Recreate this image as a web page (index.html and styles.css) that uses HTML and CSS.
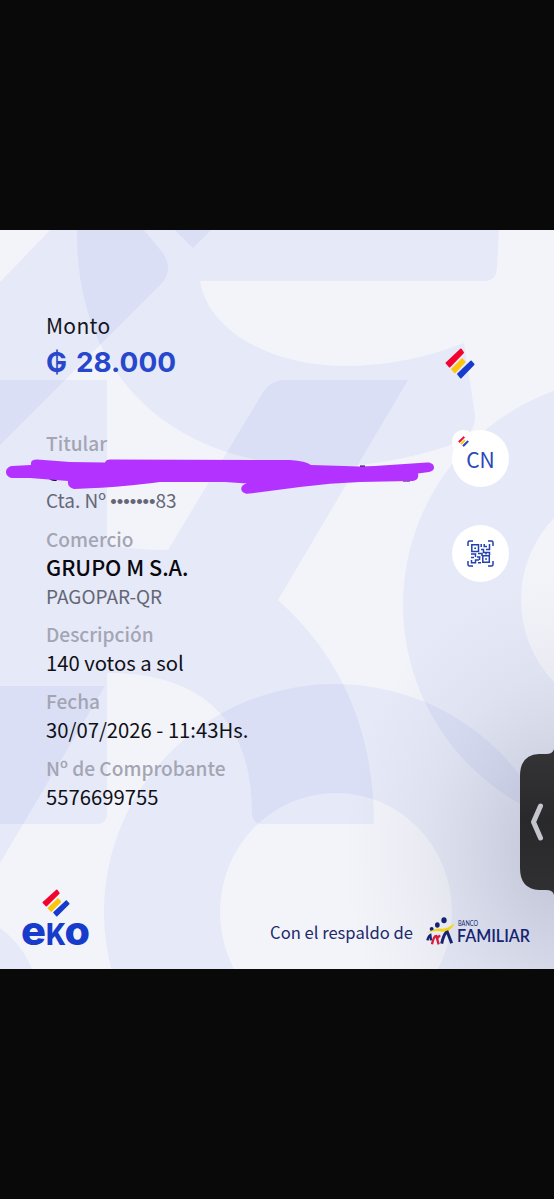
FILE: index.html
```
<!DOCTYPE html>
<html lang="es">
<head>
<meta charset="utf-8">
<title>Comprobante</title>
<link rel="stylesheet" href="styles.css">
</head>
<body>
<svg class="defs" aria-hidden="true">
  <symbol id="bars" viewBox="44 54 91 95" preserveAspectRatio="none">
    <g stroke-width="5" stroke-linejoin="round">
      <path fill="#f2042f" stroke="#f2042f" d="M48 100 92 58 99 68 58 111Z"/>
      <path fill="#fdc60c" stroke="#fdc60c" d="M65 119 96 88 104 97 74 129Z"/>
      <path fill="#173bcb" stroke="#173bcb" d="M83 134 123 95 131 104 92 145Z"/>
    </g>
  </symbol>
</svg>
<main class="receipt">
  <svg class="pattern" viewBox="0 230 554 739" aria-hidden="true">
    <defs>
      <radialGradient id="shade">
        <stop offset="0" stop-color="#777d91" stop-opacity=".38"/>
        <stop offset=".3" stop-color="#8a90a2" stop-opacity=".27"/>
        <stop offset=".65" stop-color="#a0a5b4" stop-opacity=".11"/>
        <stop offset="1" stop-color="#b0b5c2" stop-opacity="0"/>
      </radialGradient>
    </defs>
    <g class="shape">
      <path d="M50 230H144L163 253Q173 268 163 282L0 445V282Z"/>
      <path d="M77 230Q76 292 100 344C140 425 220 467 330 467Q390 465 448 446L466 436Q476 428 475 415L464 343Q405 366 345 366C270 366 208 330 200 281H484Q496 281 497 268L499 230Z"/>
      <path d="M175 230H211L193 248Z"/>
      <path d="M0 380H107V814Q107 824 97 824H0Z"/>
      <path d="M285 380H408L278 600Q374 686 374 824H262Q253 824 252 814C252 730 212 673 107 673V545Q138 550 168 550L262 394Q270 380 285 380Z"/>
      <path d="M0 686H105L0 863Z"/>
      <path fill-rule="evenodd" d="M104 912a231 228 0 1 0 462 0a231 228 0 1 0-462 0ZM220 912a116 119 0 1 0 232 0a116 119 0 1 0-232 0Z"/>
      <path fill-rule="evenodd" d="M403 605a230 228 0 1 0 460 0a230 228 0 1 0-460 0ZM521 600a115 117 0 1 0 230 0a115 117 0 1 0-230 0Z"/>
      <path d="M0 928Q22 944 32 969H0Z"/>
    </g>
    <ellipse cx="568" cy="850" rx="225" ry="275" fill="url(#shade)"/>
  </svg>

  <div class="content">
    <section class="summary">
      <div>
        <div class="amount-label">Monto</div>
        <svg class="amount" viewBox="0 0 132 34"><text class="amount-text" x="0" y="26" textLength="21" lengthAdjust="spacingAndGlyphs">₲</text><text class="amount-text" x="30" y="26" textLength="100" lengthAdjust="spacingAndGlyphs">28.000</text></svg>
      </div>
    </section>
    <div class="columns">
      <div class="details">
        <section class="field"><div class="label">Titular</div><div class="row"></div><div class="note">Cta. Nº <span class="mask">•••••••</span>83</div></section>
        <section class="field"><div class="label">Comercio</div><div class="value strong">GRUPO M S.A.</div><div class="note">PAGOPAR-QR</div></section>
        <section class="field"><div class="label">Descripción</div><div class="value">140 votos a sol</div></section>
        <section class="field"><div class="label">Fecha</div><div class="value">30/07/2026 - 11:43Hs.</div></section>
        <section class="field"><div class="label">Nº de Comprobante</div><div class="value">5576699755</div></section>
      </div>
      <aside class="side">
        <svg class="mark"><use href="#bars"/></svg>
        <div class="avatar"><span class="badge"><svg><use href="#bars"/></svg></span><span class="initials">CN</span></div>
        <div class="avatar qr">
          <svg viewBox="0 0 27 27" fill="none" stroke="#2440ad" stroke-width="1.5">
            <path d="M1 6V2.500Q1 1 2.500 1H6M21 1H24.500Q26 1 26 2.500V6M26 21V24.500Q26 26 24.500 26H21M6 26H2.500Q1 26 1 24.500V21"/>
            <path d="M4.800 4.800H11.500V11.500H4.800ZM15.800 15.800H22.300V22.300H15.800Z"/>
            <path d="M7.300 8.200H9M18.200 19H20M14.200 4V7M17.200 4V6.500H20M22.500 4V9.500H19M14 9.500H16.500V12.500H22.500V15M4 14H8.500V17M11 13.500H15V16M4 17.500H7M10 17H13.500M12.500 17V20M4.500 20V22.700H8.500V20H12M11 22.700H14M19 12V14.500"/>
          </svg>
        </div>
      </aside>
    </div>
    <footer class="footer">
      <div class="eko">
        <svg class="eko-bars"><use href="#bars"/></svg>
        <svg class="eko-word" viewBox="0 0 68 40"><text class="eko-text" x="-1" y="28" textLength="25" lengthAdjust="spacingAndGlyphs">e</text><text class="eko-text eko-k" x="24" y="28" textLength="20" lengthAdjust="spacingAndGlyphs">K</text><text class="eko-text" x="42.500" y="28" textLength="25.500" lengthAdjust="spacingAndGlyphs">o</text></svg>
      </div>
      <div class="backing">
        <span>Con el respaldo de</span>
        <svg class="familiar" viewBox="0 0 106 32">
          <g transform="translate(1 1) scale(.3333)">
            <g fill="#142470"><ellipse cx="54" cy="10" rx="8" ry="9"/><ellipse cx="34" cy="24" rx="7" ry="8"/><ellipse cx="17" cy="36" rx="6" ry="6"/></g>
            <path d="M0 49Q30 31 49 35Q65 36 86 18Q75 45 49 44Q28 39 0 49Z" fill="#f4d414"/>
            <g fill="none" stroke-width="7"><path stroke="#142470" d="M4 70Q8 56 13 54L15 70"/><path stroke="#d81c3d" d="M18 82Q23 57 31 57L38 82M34 64L42 55"/><path stroke="#142470" stroke-width="9" d="M47 80Q54 47 64 45Q70 60 77 79"/></g>
          </g>
          <text class="banco" x="33" y="10" textLength="20" lengthAdjust="spacingAndGlyphs">BANCO</text>
          <text class="familiar-text" x="32" y="26" textLength="73" lengthAdjust="spacingAndGlyphs">FAMILIAR</text>
        </svg>
      </div>
    </footer>
  </div>

  <svg class="scribble" viewBox="0 450 440 50" aria-hidden="true">
    <path fill="#1b1230" d="M49 478h8v2.500q-4 1.500-8-1.500ZM360 465.500h5v3h-5ZM403 478h7v3.600h-7Z"/>
    <path fill="#b432ff" d="M12 466 31 465Q30 459.500 37 459.500L70 462 105 462.500Q106 459.500 110 459.500L290 460Q306 461 311 465L360 466.500 375 466 427 462.500C435 462 437 471 429 472L418 473.500C419 479 416 481 411 481L360 482Q330 483 300 487L250 493.500C240 495 238 485 247 483.500L225 482H160Q120 487 95 488L74 489Q67 487 68 481L30 478H12C4 477 4 467 12 466Z"/>
  </svg>
  <svg class="handle" viewBox="516 748 38 148" aria-label="Abrir panel">
    <defs><linearGradient id="panel" x2="0" y2="1"><stop stop-color="#343436"/><stop offset=".5" stop-color="#29292b"/><stop offset="1" stop-color="#303032"/></linearGradient></defs>
    <path fill="url(#panel)" d="M554 749Q553 754 546 754H539Q520 755 520 776V868Q520 889 539 890H546Q553 890 554 895Z"/>
    <path d="M540.500 806 533.500 822 540.500 838" fill="none" stroke="#c5c5ce" stroke-width="5" stroke-linecap="round" stroke-linejoin="round"/>
  </svg>
</main>
</body>
</html>
```

FILE: styles.css
```
* { box-sizing: border-box; }
body {
  margin: 0;
  padding: 230px 0;
  background: #090909;
  font-family: "Noto Sans CJK SC", "Noto Sans", sans-serif;
}
svg { display: block; }
.defs { position: absolute; width: 0; height: 0; }
.receipt {
  position: relative;
  height: 739px;
  overflow: hidden;
  background: #f3f4fa;
}
.pattern { position: absolute; inset: 0; width: 554px; height: 739px; }
.shape path { fill: #2f52d8; fill-opacity: .063; }
.content {
  position: relative;
  display: flex;
  flex-direction: column;
  height: 100%;
  padding: 80px 23px 0 46px;
}
.summary { height: 119px; }
.amount-label { font-size: 21px; line-height: 30px; letter-spacing: .3px; color: #15151c; }
.amount { width: 132px; height: 34px; margin-top: 6px; }
.amount-text { font: 700 27.500px Inter, sans-serif; fill: #2747cc; }
.columns { display: flex; justify-content: space-between; height: 460px; }
.details { display: flex; flex-direction: column; gap: 10px; }
.label, .value, .note, .row { height: 28.500px; line-height: 28.500px; font-size: 20.250px; white-space: nowrap; }
.label { color: #a3a5b3; font-weight: 500; font-size: 19.100px; }
.value { color: #101017; }
.strong { font-weight: 500; font-size: 21.600px; color: #08080d; }
.note { color: #646775; font-size: 19px; }
.mask { font-family: "Liberation Sans", sans-serif; font-size: 18.500px; }
.side { width: 63px; margin-right: 22px; margin-top: -81px; }
.mark { width: 30px; height: 31px; margin-left: -1px; }
.avatar {
  position: relative;
  display: flex;
  align-items: center;
  justify-content: center;
  width: 57px;
  height: 57px;
  margin: 51px 0 0 6px;
  border-radius: 50%;
  background: #fff;
  color: #2947b8;
  font-size: 21px;
}
.initials { line-height: 30px; }
.badge { position: absolute; left: 0; top: 0; padding: 6px; border-radius: 50%; background: #fff; }
.badge svg { width: 11px; height: 11px; }
.qr { margin-top: 38px; }
.qr svg { width: 27px; height: 27px; }
.footer { display: flex; justify-content: space-between; margin-left: -24px; }
.eko { width: 68px; }
.eko-bars { width: 28px; height: 28px; margin-left: 20px; }
.eko-word { width: 68px; height: 40px; overflow: visible; }
.eko-text { font: 800 40px Inter, sans-serif; fill: #173bcb; }
.eko-k { font-size: 30px; }
.backing { display: flex; align-items: center; gap: 12px; margin-top: 26px; height: 34px; color: #1d2a6c; font-size: 16.600px; white-space: nowrap; }
.familiar { width: 106px; height: 32px; overflow: visible; }
.banco { font: 400 6.800px Lato, sans-serif; fill: #142470; }
.familiar-text { font: 600 17px Lato, sans-serif; fill: #142470; }
.scribble { position: absolute; left: 0; top: 220px; width: 440px; height: 50px; }
.handle { position: absolute; right: 0; top: 518px; width: 38px; height: 148px; }
```
